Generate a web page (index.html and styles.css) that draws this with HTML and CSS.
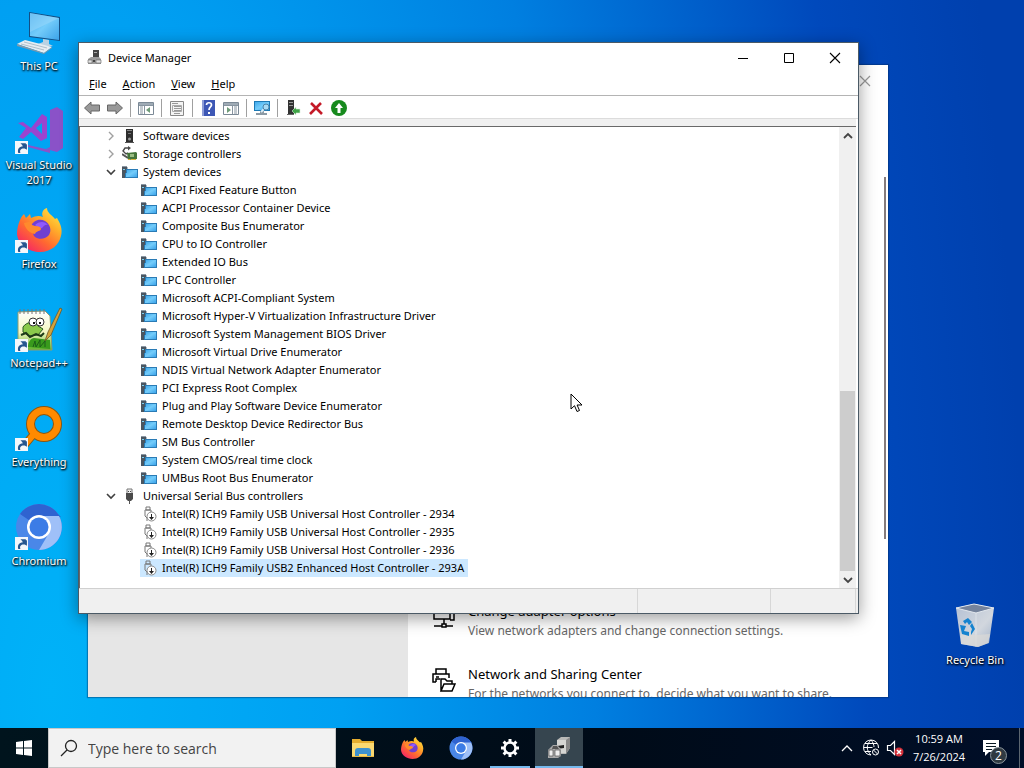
FILE: index.html
```html
<!DOCTYPE html>
<html lang="en">
<head>
    <meta charset="UTF-8">
    <meta name="viewport" content="width=device-width, initial-scale=1.0">
    <title>Device Manager</title>
    <link rel="stylesheet" href="styles.css">
</head>
<body>
    <svg class="sprite" aria-hidden="true">
        <defs>
            <linearGradient id="g-screen" x1="0" y1="0" x2="1" y2="1">
                <stop offset="0" stop-color="#3fa9ec"/>
                <stop offset=".5" stop-color="#74ccfa"/>
                <stop offset="1" stop-color="#3ba3ea"/>
            </linearGradient>
            <linearGradient id="g-fox" x1="1" y1="0" x2=".2" y2="1">
                <stop offset="0" stop-color="#fff44f"/>
                <stop offset=".35" stop-color="#ffb02a"/>
                <stop offset=".65" stop-color="#ff6a30"/>
                <stop offset="1" stop-color="#f5206a"/>
            </linearGradient>
            <linearGradient id="g-bin" x1="0" y1="0" x2="1" y2="1">
                <stop offset="0" stop-color="#b4c0d4"/>
                <stop offset=".6" stop-color="#d2d7de"/>
                <stop offset="1" stop-color="#9fb0c8"/>
            </linearGradient>
            <linearGradient id="g-page" x1="0" y1="0" x2="0" y2="1">
                <stop offset="0" stop-color="#fff"/>
                <stop offset=".55" stop-color="#f3f7c0"/>
                <stop offset="1" stop-color="#5fb32c"/>
            </linearGradient>
        </defs>
        <symbol id="closed" viewBox="0 0 16 16">
            <path d="M6 4l4 4-4 4" fill="none" stroke="#a0a0a0" stroke-width="1.4"/>
        </symbol>
        <symbol id="opened" viewBox="0 0 16 16">
            <path d="M4 6l4 4 4-4" fill="none" stroke="#404040" stroke-width="1.6"/>
        </symbol>
        <symbol id="system" viewBox="0 0 16 16">
            <path d="M0 2h5v12H0z" fill="#4a5661"/>
            <path d="M0 2h5v1H0z" fill="#8b97a3"/>
            <path d="M1 5h2v1H1z" fill="#7fd0f0"/>
            <path d="M4 5h12v9H3V9h1z" fill="#2a7bb5"/>
            <path d="M5 6h10v7H4V9h1z" fill="url(#g-screen)"/>
            <path d="M5 3h1v2H5z" fill="#b0bac4"/>
        </symbol>
        <symbol id="software" viewBox="0 0 16 16">
            <path d="M4 1h7v14H4z" fill="#2e2e2e"/>
            <path d="M5 2h5v1H5z" fill="#8a8a8a"/>
            <path d="M6 5h3v1H6z" fill="#777"/>
            <circle cx="7.500" cy="11" r="1.500" fill="#9a9a9a"/>
            <path d="M3 14h9v1H3z" fill="#555"/>
        </symbol>
        <symbol id="storage" viewBox="0 0 16 16">
            <path d="M7 2H3L1 5l3 3 2-1" fill="none" stroke="#4a4a4a" stroke-width="1.400"/>
            <path d="M6 0l3 2-3 2.500z" fill="#4a4a4a"/>
            <path d="M0 8l6 4" fill="none" stroke="#555" stroke-width="2"/>
            <path d="M5 7l9-1 1 1v6l-9 1z" fill="#45743a"/>
            <path d="M8 8h4v3H8z" fill="#9bbd83"/>
            <path d="M6 13h2v1H6zm3 0h5v1H9z" fill="#d8b23c"/>
        </symbol>
        <symbol id="usb" viewBox="0 0 16 16">
            <path d="M5 1h5v5H5z" fill="#eee" stroke="#777"/>
            <path d="M6 3h1v1H6zm2 0h1v1H8z" fill="#444"/>
            <path d="M4 5h7v6l-2 2H6l-2-2z" fill="#4a4a4a"/>
            <path d="M7 12h1v4H7z" fill="#555"/>
        </symbol>
        <symbol id="usb-down" viewBox="0 0 16 16">
            <path d="M5 1h4v3H5zM4 4h6v3M4 4v6l2 2v3" fill="none" stroke="#777"/>
            <circle cx="10.500" cy="10.500" r="4.500" fill="#fff" stroke="#888"/>
            <path d="M10 8h1v3h2l-2.500 3L8 11h2z" fill="#222"/>
        </symbol>
        <symbol id="shortcut" viewBox="0 0 12 12">
            <path d="M0 0h12v12H0z" fill="#f4f7fb"/>
            <path d="M3 11c-1-4 1-6 4-6V3l4 .0V8L9 7C6 6.500 4 8 5 11z" fill="#27568f"/>
            <path d="M5 2h5v5z" fill="#27568f"/>
        </symbol>
        <symbol id="firefox" viewBox="0 0 48 48">
            <path d="M5 14c1-3 3-5 4-6l2 4c2-2 3-3 4-4l1 4c4-2 8-3 12-1-2-4 0-8 4-9 0 5 5 7 8 11l2-1c3 5 6 11 4 18-2 9-10 16-21 16S3 39 2 28c0-5 1-9 3-14z" fill="url(#g-fox)"/>
            <path d="M16 20c2-5 8-8 14-5 5 3 7 9 4 14-3 4-10 5-14 2-2-2-2-3-1-5l7-2c-2-2-5-3-10-4z" fill="#6f3fd0"/>
            <path d="M20 19c4-4 10-4 13 0-3-1-4 1-6 3-2 1-4 0-7-3z" fill="#9059ff"/>
            <path d="M9 17l8-2c-1 3-1 4 3 5 4 0 6 1 6 3-1 2-5 2-6 5-5-1-10-5-11-11z" fill="#ff8a2c"/>
        </symbol>
        <symbol id="chromium" viewBox="0 0 48 48">
            <circle cx="24" cy="24" r="23" fill="#4a87e8"/>
            <path d="M24 24L5 11a23 23 0 0 1 38 0l3 3H24z" fill="#2f63d0"/>
            <path d="M24 13h20a23 23 0 0 1-20 34l10-17z" fill="#9fc0f8"/>
            <circle cx="24" cy="24" r="12" fill="#fff"/>
            <circle cx="24" cy="24" r="9.500" fill="#3c7ce6"/>
        </symbol>
    </svg>

    <div class="desktop">
        <main class="workspace">
            <div class="shortcuts">
                <a class="shortcut" href="#">
                    <svg class="picture" viewBox="0 0 48 48">
                        <path d="M14 4l31 5v24l-31-4z" fill="#134f85"/>
                        <path d="M15 5l29 5v22l-29-4z" fill="url(#g-screen)"/>
                        <path d="M15 5l29 5L15 24z" fill="#a4dcfb" opacity=".45"/>
                        <path d="M28 31l6 1v4l4 2-9 1-6-3 5-2z" fill="#b9d2e3"/>
                        <path d="M2 36l8-4 27 7-8 6z" fill="#e6edf2"/>
                        <path d="M2 36v2l27 8v-1zM29 45v1l8-6v-1z" fill="#7e99ab"/>
                        <path d="M6 36l23 6M9 34l23 6" stroke="#aebfcb"/>
                    </svg>
                    <span class="name">This PC</span>
                </a>
                <a class="shortcut" href="#">
                    <svg class="picture" viewBox="0 0 48 48">
                        <path d="M35 3l7-3 6 4v37l-6 4-11-3 4-2z" fill="#8a52c8"/>
                        <path d="M3 16l5-1 8 6 11-14 5 3v21l-6 3-10-9-8 7-4-2 7-9zM27 16l-6 5 6 6z" fill="#9a44cf" fill-rule="evenodd"/>
                        <path d="M13 38l22 5v3l-22-6z" fill="#8a52c8"/>
                        <use href="#shortcut" x="0" y="34" width="13" height="13"/>
                    </svg>
                    <span class="name">Visual Studio 2017</span>
                </a>
                <a class="shortcut" href="#">
                    <svg class="picture" viewBox="0 0 48 48">
                        <use href="#firefox" width="48" height="48"/>
                        <use href="#shortcut" x="0" y="34" width="13" height="13"/>
                    </svg>
                    <span class="name">Firefox</span>
                </a>
                <a class="shortcut" href="#">
                    <svg class="picture" viewBox="0 0 48 48">
                        <path d="M3 7l27-1 5 5 2 34H3z" fill="url(#g-page)" stroke="#8d9b72"/>
                        <path d="M5 4v5m4-5v5m4-5v5m4-5v5m4-5v5m4-5v5m4-5v5" stroke="#777"/>
                        <path d="M13 42c0-5 3-9 6-9l16 2v9z" fill="#399a1c"/>
                        <path d="M18 42l2-6 1 6 4-7v7l5-6v6" fill="none" stroke="#1b5d18"/>
                        <path d="M8 22c4-6 13-6 15-1l5 3-5 6-9 1-6-4z" fill="#8ac94b" stroke="#285a22"/>
                        <path d="M6 30l5-2 4 4 6-3 5 2 3-3" fill="none" stroke="#1d3a18" stroke-width="2"/>
                        <circle cx="18" cy="17" r="4" fill="#fff" stroke="#333"/>
                        <circle cx="25" cy="17" r="4" fill="#fff" stroke="#333"/>
                        <path d="M18 17h2v2h-2zM24 17h2v2h-2z" fill="#111"/>
                        <path d="M30 36l3-9L45 3l2 1-11 26z" fill="#d3a33b" stroke="#6c5629" stroke-width=".8"/>
                        <use href="#shortcut" x="0" y="34" width="13" height="13"/>
                    </svg>
                    <span class="name">Notepad++</span>
                </a>
                <a class="shortcut" href="#">
                    <svg class="picture" viewBox="0 0 48 48">
                        <path d="M18 31L8 43" stroke="#8b560f" stroke-width="8"/>
                        <circle cx="29" cy="20" r="13.500" fill="none" stroke="#8b560f" stroke-width="9"/>
                        <path d="M19 30L8 43" stroke="#ff8a00" stroke-width="6"/>
                        <circle cx="29" cy="20" r="13.500" fill="none" stroke="#ff8a00" stroke-width="7"/>
                        <use href="#shortcut" x="0" y="34" width="13" height="13"/>
                    </svg>
                    <span class="name">Everything</span>
                </a>
                <a class="shortcut" href="#">
                    <svg class="picture" viewBox="0 0 48 48">
                        <use href="#chromium" width="48" height="48"/>
                        <use href="#shortcut" x="0" y="34" width="13" height="13"/>
                    </svg>
                    <span class="name">Chromium</span>
                </a>
            </div>

            <a class="shortcut recycle" href="#">
                <svg class="picture" viewBox="0 0 48 48">
                    <path d="M5 6l18-4 20 4-5 35-11 4-17-3z" fill="url(#g-bin)"/>
                    <path d="M5 6l18-4 20 4-18 5z" fill="#75839c" stroke="#e3e8ee"/>
                    <path d="M25 11v34" stroke="#eef1f4" opacity=".5"/>
                    <path d="M10 32l15 1 14-1-2 9-10 4-17-3z" fill="#dcdad7" opacity=".7"/>
                    <path d="M12 19l5-3 4 4-3 3-2-3-2 2zM21 21l3 6-4 6v-3l1-3-2-3zM9 23l6 1-2 5 5 1v4l-7-2z" fill="#1583cf"/>
                </svg>
                <span class="name">Recycle Bin</span>
            </a>

            <section class="window settings" aria-label="Settings">
                <nav class="settings-nav"></nav>
                <div class="settings-page">
                    <button class="settings-close" aria-label="Close">
                        <svg viewBox="0 0 12 12"><path d="M1 1l10 10M11 1L1 11" stroke="#999" stroke-width="1.2"/></svg>
                    </button>
                    <div class="settings-scroll"></div>
                    <ul class="options">
                        <li class="option">
                            <svg class="option-icon" viewBox="0 0 24 24" fill="none" stroke="#000" stroke-width="1.5">
                                <path d="M2 3h16v11H2zM18 6h4v9h-4M12 14v5M10 19h4v3h-4zM2 21h8m4 0h7"/>
                            </svg>
                            <div>
                                <h3>Change adapter options</h3>
                                <p>View network adapters and change connection settings.</p>
                            </div>
                        </li>
                        <li class="option">
                            <svg class="option-icon" viewBox="0 0 24 24" fill="none" stroke="#000" stroke-width="1.5">
                                <path d="M4 6V1h10v5M4 14H1V6h16v4M4 9h3M4 14v-3h4"/>
                                <path d="M9 23V11h4l2 2h5v3M9 23l3-7h11l-3 7z"/>
                            </svg>
                            <div>
                                <h3>Network and Sharing Center</h3>
                                <p>For the networks you connect to, decide what you want to share.</p>
                            </div>
                        </li>
                    </ul>
                </div>
            </section>

            <section class="window manager" aria-label="Device Manager">
                <header class="titlebar">
                    <svg class="icon" viewBox="0 0 16 16">
                        <path d="M6 0h6v9H6z" fill="#444"/>
                        <path d="M7 2h3v1H7z" fill="#aaa"/>
                        <path d="M1 9l3-2h8l2 2v5H1z" fill="#9b9b9b"/>
                        <path d="M1 10h4v3H1zm8 0h5v3H9z" fill="#e3e3e3" stroke="#666" stroke-width=".6"/>
                        <path d="M6 10h2v2H6z" fill="#444"/>
                    </svg>
                    <h1>Device Manager</h1>
                    <button class="caption" aria-label="Minimize">
                        <svg viewBox="0 0 12 12"><path d="M1 6.500h10" stroke="#000"/></svg>
                    </button>
                    <button class="caption" aria-label="Maximize">
                        <svg viewBox="0 0 12 12"><path d="M1.500 1.500h9v9h-9z" fill="none" stroke="#000"/></svg>
                    </button>
                    <button class="caption" aria-label="Close">
                        <svg viewBox="0 0 12 12"><path d="M1 1l10 10M11 1L1 11" stroke="#000" stroke-width="1.1"/></svg>
                    </button>
                </header>
                <nav class="menubar">
                    <button><u>F</u>ile</button>
                    <button><u>A</u>ction</button>
                    <button><u>V</u>iew</button>
                    <button><u>H</u>elp</button>
                </nav>
                <div class="toolbar">
                    <button aria-label="Back">
                        <svg viewBox="0 0 16 16"><path d="M.5 8L7 2v3h8.500v6H7v3z" fill="#999" stroke="#666"/></svg>
                    </button>
                    <button aria-label="Forward">
                        <svg viewBox="0 0 16 16"><path d="M15.500 8L9 2v3H.5v6H9v3z" fill="#999" stroke="#666"/></svg>
                    </button>
                    <span class="divider"></span>
                    <button aria-label="Show or hide console tree">
                        <svg viewBox="0 0 16 16">
                            <path d="M.5 2.500h15v12H.5z" fill="#fff" stroke="#7b8996"/>
                            <path d="M1 3h14v2H1z" fill="#9fabb5"/>
                            <path d="M2 7h3m-3 2h3m-3 2h3m-3 2h3M6.500 6v8M1 5.500h14" stroke="#8794a0"/>
                            <path d="M12 7v6L8 10z" fill="#6e9b78"/>
                        </svg>
                    </button>
                    <span class="divider"></span>
                    <button aria-label="Properties">
                        <svg viewBox="0 0 16 16">
                            <path d="M1.500 1.500h13v14h-13z" fill="#f4f4f4" stroke="#888"/>
                            <path d="M3 3.500h6M5 6.500h7M5 8.500h7M5 10.500h7M5 13.500h6" stroke="#999"/>
                            <path d="M3.500 5.500h9v6h-9z" fill="none" stroke="#aaa"/>
                        </svg>
                    </button>
                    <span class="divider"></span>
                    <button aria-label="Help">
                        <svg viewBox="0 0 16 16">
                            <path d="M2 0h13v16H2z" fill="#3d57b5"/>
                            <path d="M2 0h2v16H2z" fill="#8d9cd6"/>
                            <path d="M6.500 5c0-3 5-3 5 0 0 2-2.500 2-2.500 5" fill="none" stroke="#fff" stroke-width="1.700"/>
                            <path d="M8 12h2v2H8z" fill="#fff"/>
                        </svg>
                    </button>
                    <button aria-label="Show or hide action pane">
                        <svg viewBox="0 0 16 16">
                            <path d="M.5 2.500h15v12H.5z" fill="#fff" stroke="#7b8996"/>
                            <path d="M1 3h14v2H1z" fill="#9fabb5"/>
                            <path d="M11 7h3m-3 2h3m-3 2h3m-3 2h3M9.500 6v8M1 5.500h14" stroke="#8794a0"/>
                            <path d="M4 7v6l4-3z" fill="#6e9b78"/>
                        </svg>
                    </button>
                    <span class="divider"></span>
                    <button aria-label="Scan for hardware changes">
                        <svg viewBox="0 0 16 16">
                            <path d="M0 1h16v10H0z" fill="#1c79b5"/>
                            <path d="M1 2h14v8H1z" fill="url(#g-screen)"/>
                            <path d="M6 11h4v2H6zM2 13h11v2H2z" fill="#8c9aa5"/>
                            <path d="M7 12l4-4" stroke="#d9edf8" stroke-width="2"/>
                            <circle cx="12" cy="7" r="3" fill="#a9dbf5" stroke="#4b84aa"/>
                        </svg>
                    </button>
                    <span class="divider"></span>
                    <button aria-label="Update driver">
                        <svg viewBox="0 0 16 16">
                            <path d="M3 0h6v14H3z" fill="#333"/>
                            <path d="M4 2h4v1H4zm0 3h4v1H4z" fill="#999"/>
                            <path d="M2 14h7v1H2z" fill="#666"/>
                            <path d="M7 11l4-4v2h4v4h-4v2z" fill="#3fa447" stroke="#d8edda" stroke-width=".6"/>
                        </svg>
                    </button>
                    <button aria-label="Uninstall device">
                        <svg viewBox="0 0 16 16"><path d="M3 3l11 11M13 3L2 14" stroke="#c41a28" stroke-width="2.600"/></svg>
                    </button>
                    <button aria-label="Enable device">
                        <svg viewBox="0 0 16 16">
                            <circle cx="8" cy="8" r="8" fill="#178a1d"/>
                            <path d="M8 3l4 5H9.500v5h-3V8H4z" fill="#fff"/>
                        </svg>
                    </button>
                </div>
                <div class="pane">
                    <ul class="tree">
                        <li>
                            <div class="group"><button class="toggle" aria-label="Expand"><svg><use href="#closed"/></svg></button><svg class="icon"><use href="#software"/></svg>Software devices</div>
                        </li>
                        <li>
                            <div class="group"><button class="toggle" aria-label="Expand"><svg><use href="#closed"/></svg></button><svg class="icon"><use href="#storage"/></svg>Storage controllers</div>
                        </li>
                        <li>
                            <div class="group"><button class="toggle" aria-label="Collapse"><svg><use href="#opened"/></svg></button><svg class="icon"><use href="#system"/></svg>System devices</div>
                            <ul class="devices">
                                <li><svg class="icon"><use href="#system"/></svg>ACPI Fixed Feature Button</li>
                                <li><svg class="icon"><use href="#system"/></svg>ACPI Processor Container Device</li>
                                <li><svg class="icon"><use href="#system"/></svg>Composite Bus Enumerator</li>
                                <li><svg class="icon"><use href="#system"/></svg>CPU to IO Controller</li>
                                <li><svg class="icon"><use href="#system"/></svg>Extended IO Bus</li>
                                <li><svg class="icon"><use href="#system"/></svg>LPC Controller</li>
                                <li><svg class="icon"><use href="#system"/></svg>Microsoft ACPI-Compliant System</li>
                                <li><svg class="icon"><use href="#system"/></svg>Microsoft Hyper-V Virtualization Infrastructure Driver</li>
                                <li><svg class="icon"><use href="#system"/></svg>Microsoft System Management BIOS Driver</li>
                                <li><svg class="icon"><use href="#system"/></svg>Microsoft Virtual Drive Enumerator</li>
                                <li><svg class="icon"><use href="#system"/></svg>NDIS Virtual Network Adapter Enumerator</li>
                                <li><svg class="icon"><use href="#system"/></svg>PCI Express Root Complex</li>
                                <li><svg class="icon"><use href="#system"/></svg>Plug and Play Software Device Enumerator</li>
                                <li><svg class="icon"><use href="#system"/></svg>Remote Desktop Device Redirector Bus</li>
                                <li><svg class="icon"><use href="#system"/></svg>SM Bus Controller</li>
                                <li><svg class="icon"><use href="#system"/></svg>System CMOS/real time clock</li>
                                <li><svg class="icon"><use href="#system"/></svg>UMBus Root Bus Enumerator</li>
                            </ul>
                        </li>
                        <li>
                            <div class="group"><button class="toggle" aria-label="Collapse"><svg><use href="#opened"/></svg></button><svg class="icon"><use href="#usb"/></svg>Universal Serial Bus controllers</div>
                            <ul class="devices">
                                <li><svg class="icon"><use href="#usb-down"/></svg>Intel(R) ICH9 Family USB Universal Host Controller - 2934</li>
                                <li><svg class="icon"><use href="#usb-down"/></svg>Intel(R) ICH9 Family USB Universal Host Controller - 2935</li>
                                <li><svg class="icon"><use href="#usb-down"/></svg>Intel(R) ICH9 Family USB Universal Host Controller - 2936</li>
                                <li class="selected"><svg class="icon"><use href="#usb-down"/></svg>Intel(R) ICH9 Family USB2 Enhanced Host Controller - 293A</li>
                            </ul>
                        </li>
                    </ul>
                    <div class="scrollbar">
                        <button aria-label="Scroll up"><svg viewBox="0 0 10 10"><path d="M1 7l4-4 4 4" fill="none" stroke="#444" stroke-width="1.800"/></svg></button>
                        <div class="thumb"></div>
                        <button aria-label="Scroll down"><svg viewBox="0 0 10 10"><path d="M1 3l4 4 4-4" fill="none" stroke="#444" stroke-width="1.800"/></svg></button>
                    </div>
                </div>
                <footer class="statusbar">
                    <span class="status-main"></span>
                    <span class="status-mid"></span>
                    <span class="status-end"></span>
                </footer>
            </section>

            <svg class="cursor" viewBox="0 0 13 20">
                <path d="M1 1v15l3.500-3.300L7 18.500l2.500-1-2.400-5.500H12z" fill="#fff" stroke="#000"/>
            </svg>
        </main>

        <footer class="taskbar">
            <button class="start" aria-label="Start">
                <svg viewBox="0 0 16 16"><path d="M0 2l7-1v6.500H0zM8 1l8-1v7.500H8zM0 8.500h7V15l-7-1zM8 8.500h8V16l-8-1z" fill="#fff"/></svg>
            </button>
            <label class="search">
                <svg viewBox="0 0 18 18" fill="none" stroke="#222" stroke-width="1.300">
                    <circle cx="11" cy="7" r="5.500"/>
                    <path d="M7 11l-6 6"/>
                </svg>
                <input type="text" placeholder="Type here to search" aria-label="Search">
            </label>
            <div class="tasks">
                <button aria-label="File Explorer">
                    <svg viewBox="0 0 24 24">
                        <path d="M1 3h8l2 2h12v16H1z" fill="#e5ad2f"/>
                        <path d="M1 7h22v14H1z" fill="#fbd971"/>
                        <path d="M4 15c0-2 1-3 3-3h10c2 0 3 1 3 3v6h-4v-3H8v3H4z" fill="#3f92cf"/>
                        <path d="M1 20h22v1H1z" fill="#e8b844"/>
                    </svg>
                </button>
                <button aria-label="Firefox"><svg viewBox="0 0 48 48"><use href="#firefox"/></svg></button>
                <button aria-label="Chromium"><svg viewBox="0 0 48 48"><use href="#chromium"/></svg></button>
                <button class="running" aria-label="Settings">
                    <svg viewBox="0 0 24 24" fill="none" stroke="#fff">
                        <circle cx="12" cy="12" r="5.500" stroke-width="2.500"/>
                        <path d="M12 3v3m0 12v3M3 12h3m12 0h3M5.600 5.600l2.200 2.200m8.400 8.400l2.200 2.200M5.600 18.400l2.200-2.200m8.400-8.400l2.200-2.200" stroke-width="3"/>
                    </svg>
                </button>
                <button class="running active" aria-label="Device Manager">
                    <svg viewBox="0 0 24 24">
                        <path d="M10 4l4-3h9v11l-4 6h-9z" fill="#b9b9b7"/>
                        <path d="M10 4h9v13h-9z" fill="#d6d6d3"/>
                        <path d="M10 10l7-1v3l-7 1z" fill="#222"/>
                        <path d="M19 4l4-3v11l-4 6z" fill="#888"/>
                        <path d="M1 14l5-5h4l4 4v7l-3 2H1z" fill="#aaa"/>
                        <path d="M2 14h4v6H2zm6 0h5v6H8z" fill="#eee" stroke="#555" stroke-width=".7"/>
                        <path d="M6 10h4l2 3H5z" fill="#555"/>
                    </svg>
                </button>
            </div>
            <div class="tray">
                <button aria-label="Show hidden icons">
                    <svg viewBox="0 0 18 18"><path d="M4 12l5-5 5 5" fill="none" stroke="#fff" stroke-width="1.300"/></svg>
                </button>
                <button aria-label="Network">
                    <svg viewBox="0 0 18 18" fill="none" stroke="#fff">
                        <path d="M9 1a7.500 7.500 0 1 0 0 15M9 1a7.500 7.500 0 0 1 7.500 8M1.500 8.500h9M3 4.500h12M3 12.500h6M9 1C4 6 4 11 9 16M9 1c2 2 3 5 3 7"/>
                        <circle cx="13.500" cy="13" r="3"/>
                        <path d="M11.500 11l4 4"/>
                    </svg>
                </button>
                <button aria-label="Volume">
                    <svg viewBox="0 0 18 18">
                        <path d="M1.500 6.500h3l4-4v13l-4-4h-3z" fill="none" stroke="#fff" stroke-width="1.200"/>
                        <circle cx="13" cy="13" r="4.500" fill="#d3303a"/>
                        <path d="M11 11l4 4m0-4l-4 4" stroke="#fff" stroke-width="1.500"/>
                    </svg>
                </button>
                <button class="clock"><time>10:59 AM</time><time>7/26/2024</time></button>
                <button class="notices" aria-label="Notifications">
                    <svg viewBox="0 0 18 18">
                        <path d="M1 1h16v12H7l-4 4v-4H1z" fill="#fff"/>
                        <path d="M4 4.500h10M4 7.500h10M4 10.500h6" stroke="#0a1a24"/>
                    </svg>
                    <span class="count">2</span>
                </button>
                <button class="peek" aria-label="Show desktop"></button>
            </div>
        </footer>
    </div>
</body>
</html>
```
FILE: styles.css
```css
* {
    box-sizing: border-box;
}
body {
    margin: 0;
    font-family: "Noto Sans", "Open Sans", sans-serif;
    font-size: 11px;
    color: #000;
}
button {
    border: 0;
    padding: 0;
    background: none;
    font: inherit;
    color: inherit;
}
svg {
    display: block;
}
ul, h1, h3, p {
    margin: 0;
    padding: 0;
    list-style: none;
    font-size: inherit;
    font-weight: normal;
}
.sprite {
    position: absolute;
    width: 0;
    height: 0;
}
.desktop {
    display: flex;
    flex-direction: column;
    height: 100vh;
    overflow: hidden;
    background: radial-gradient(95% 300% at 5% 90%, #00b2f8 0%, #00a0f2 30%, #007fe0 56%, #0049bc 84%, #0040ae 100%);
}
.workspace {
    position: relative;
    flex: 1;
    min-height: 0;
}

/* desktop shortcuts */
.shortcuts {
    display: flex;
    flex-direction: column;
    width: 78px;
    padding-top: 8px;
}
.shortcut {
    display: flex;
    flex-direction: column;
    align-items: center;
    gap: 2px;
    height: 99px;
    line-height: 15px;
    color: #fff;
    text-align: center;
    text-decoration: none;
    text-shadow: 1px 1px 2px #000, 0 1px 2px #000;
}
.picture {
    width: 48px;
    height: 48px;
}
.recycle {
    position: absolute;
    right: 12px;
    bottom: 27px;
    width: 74px;
}

/* windows */
.window {
    position: absolute;
    display: flex;
}
.settings {
    top: 65px;
    right: 136px;
    bottom: 31px;
    left: 88px;
    background: #fff;
    overflow: hidden;
    box-shadow: 0 0 1px 1px rgba(0, 40, 90, .4);
}
.settings-nav {
    width: 40%;
    background: #e6e6e6;
}
.settings-page {
    position: relative;
    flex: 1;
}
.settings-close {
    position: absolute;
    top: 10px;
    right: 17px;
}
.settings-close svg {
    width: 12px;
    height: 12px;
}
.settings-scroll {
    position: absolute;
    top: 112px;
    right: 2px;
    bottom: 158px;
    width: 2px;
    background: #857c7c;
}
.options {
    display: flex;
    flex-direction: column;
    gap: 24px;
    padding: 536px 24px 0;
}
.option {
    display: flex;
    gap: 12px;
    font-size: 13px;
    line-height: 20px;
    white-space: nowrap;
}
.option p {
    font-size: 12px;
    line-height: 19px;
    color: #666;
}
.option-icon {
    width: 24px;
    height: 24px;
    margin-top: 4px;
}
.manager {
    top: 42px;
    right: 165px;
    bottom: 114px;
    left: 78px;
    flex-direction: column;
    border: 1px solid #4b5a66;
    background: #fff;
    box-shadow: 0 4px 16px rgba(0, 0, 0, .4);
}
.titlebar {
    display: flex;
    align-items: center;
    height: 29px;
    padding-left: 8px;
}
.titlebar h1 {
    flex: 1;
    margin-left: 5px;
}
.caption {
    display: flex;
    justify-content: center;
    align-items: center;
    width: 46px;
    height: 29px;
}
.caption svg {
    width: 12px;
    height: 12px;
}
.icon {
    flex: none;
    width: 16px;
    height: 16px;
}
.menubar {
    display: flex;
    gap: 16px;
    height: 24px;
    padding-left: 10px;
    border-bottom: 1px solid #b4b4b4;
}
.toolbar {
    display: flex;
    align-items: center;
    gap: 7px;
    height: 23px;
    padding: 2px 0 0 5px;
    border-bottom: 1px solid #dcdcdc;
}
.toolbar svg {
    width: 16px;
    height: 16px;
}
.divider {
    width: 1px;
    height: 18px;
    background: #a0a0a0;
}
.pane {
    display: flex;
    flex: 1;
    min-height: 0;
    margin-right: 2px;
    border-top: 7px solid #f0f0f0;
    box-shadow: inset 1px 1px #696969;
    padding: 1px 0 0 2px;
}
.tree {
    flex: 1;
    overflow: hidden;
    line-height: 18px;
    white-space: nowrap;
}
.group {
    display: flex;
    align-items: center;
    gap: 5px;
    height: 18px;
    padding-left: 21px;
}
.toggle {
    margin-right: -3px;
}
.toggle svg {
    width: 18px;
    height: 16px;
}
.devices {
    display: flex;
    flex-direction: column;
    align-items: flex-start;
    padding-left: 59px;
}
.devices li {
    display: flex;
    align-items: center;
    gap: 5px;
    height: 18px;
    padding: 0 4px 0 1px;
}
.devices .selected {
    background: #cce8ff;
}
.scrollbar {
    display: flex;
    flex-direction: column;
    width: 17px;
    background: #f0f0f0;
}
.scrollbar button {
    display: flex;
    justify-content: center;
    align-items: center;
    height: 17px;
}
.scrollbar svg {
    width: 10px;
    height: 10px;
}
.thumb {
    height: 39%;
    margin: auto 1px 0;
    background: #cdcdcd;
}
.statusbar {
    display: flex;
    height: 25px;
    border-top: 1px solid #d0d0d0;
    background: #f0f0f0;
}
.statusbar span {
    border-right: 1px solid #d7d7d7;
}
.status-main {
    flex: 1;
}
.status-mid {
    width: 133px;
}
.status-end {
    width: 85px;
    margin-right: 2px;
}
.cursor {
    position: absolute;
    top: 393px;
    left: 570px;
    width: 13px;
    height: 20px;
}

/* taskbar */
.taskbar {
    display: flex;
    height: 40px;
    background: linear-gradient(90deg, #00141d, #000b18 60%, #000e28);
    font-family: "Open Sans", "Noto Sans", sans-serif;
    color: #fff;
}
.taskbar button {
    display: flex;
    justify-content: center;
    align-items: center;
}
.start {
    width: 48px;
}
.start svg {
    width: 16px;
    height: 16px;
}
.search {
    display: flex;
    align-items: center;
    gap: 10px;
    width: 288px;
    padding-left: 11px;
    border: 1px solid #c8c8c8;
    background: #f2f2f2;
}
.search svg {
    width: 18px;
    height: 18px;
}
.search input {
    flex: 1;
    min-width: 0;
    border: 0;
    padding: 0;
    background: none;
    font: inherit;
    font-size: 14px;
}
.search input::placeholder {
    color: #444;
}
.tasks {
    display: flex;
    flex: 1;
    gap: 1px;
    padding-left: 3px;
}
.tasks button {
    position: relative;
    width: 48px;
}
.tasks svg {
    width: 24px;
    height: 24px;
}
.running::after {
    content: "";
    position: absolute;
    right: 4px;
    bottom: 0;
    left: 4px;
    height: 2px;
    background: #76b9ed;
}
.active {
    background: #36454f;
}
.active::after {
    right: 0;
    left: 0;
}
.tray {
    display: flex;
}
.tray button {
    width: 24px;
}
.tray svg {
    width: 18px;
    height: 18px;
}
.tray .clock {
    flex-direction: column;
    width: 64px;
    line-height: 18px;
}
.tray .notices {
    position: relative;
    width: 48px;
    padding-right: 8px;
}
.count {
    position: absolute;
    right: 12px;
    bottom: 4px;
    width: 17px;
    height: 17px;
    border: 1px solid #8b959c;
    border-radius: 50%;
    background: #303a42;
    font-size: 12px;
    line-height: 15px;
}
.tray .peek {
    width: 5px;
    border-left: 1px solid #5c6670;
}
```
